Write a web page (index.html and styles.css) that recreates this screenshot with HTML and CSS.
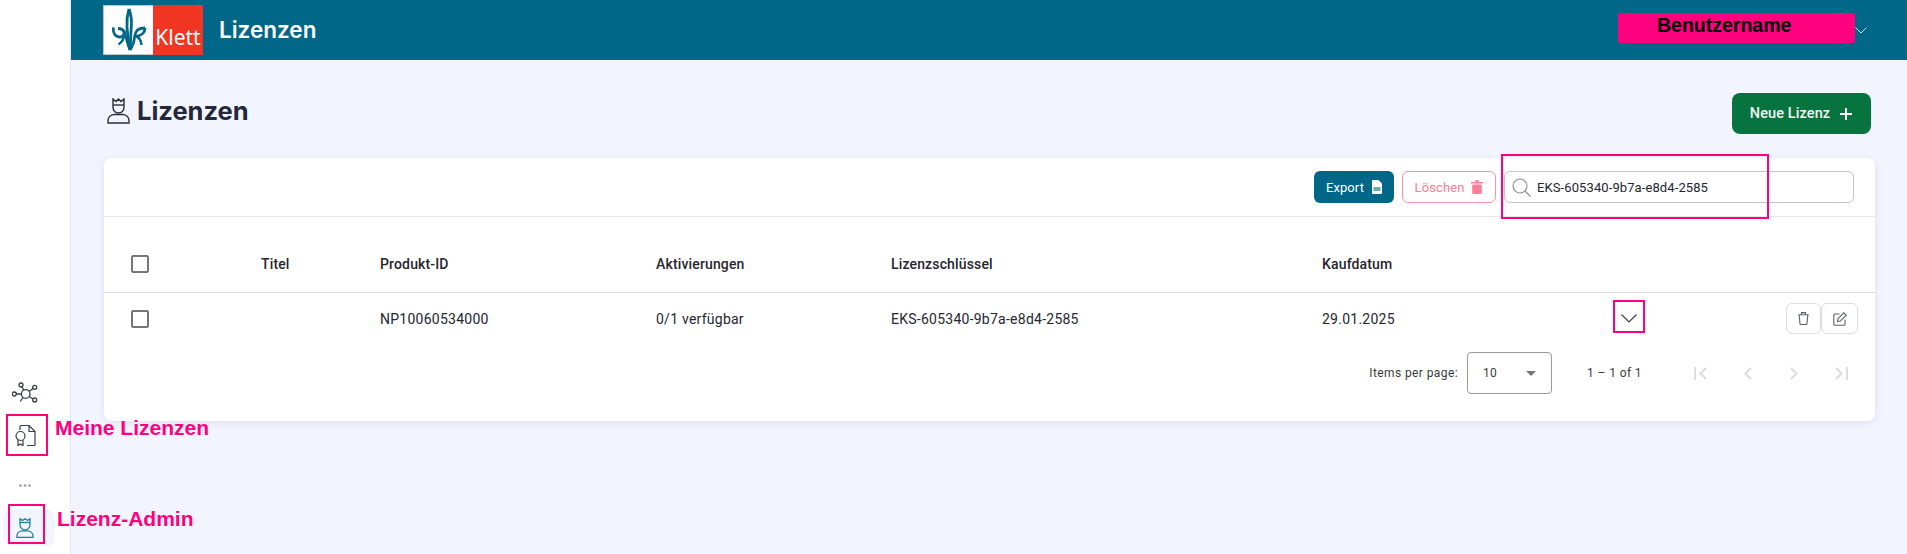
FILE: index.html
```html
<!DOCTYPE html>
<html lang="de">
<head>
    <meta charset="UTF-8">
    <title>Lizenzen</title>
    <link rel="stylesheet" href="styles.css">
</head>
<body>
    <aside class="sidebar">
        <div class="nav-item nav-network">
            <svg width="26" height="26" viewBox="0 0 26 26" fill="none" stroke="#3a3d4a" stroke-width="1.3">
                <circle cx="13.700" cy="14" r="4.300"/><circle cx="9" cy="5" r="2"/><circle cx="22.700" cy="7.300" r="2"/><circle cx="2.300" cy="14" r="2"/><circle cx="22.700" cy="20" r="2"/>
                <path d="M10 6.800l1.800 3.500M21 8.500l-4.200 3M4.300 14h5.100M21 19l-4-2.500M11 17.500l-2.800 4"/>
            </svg>
        </div>
        <div class="nav-item nav-license">
            <svg width="21" height="21" viewBox="0 0 21 21" fill="none" stroke="#3a3d4a" stroke-width="1.200">
                <path d="M5 5V2a1.500 1.500 0 0 1 1.500-1.500H14L20 6.500v13a1 1 0 0 1-1 1h-7"/>
                <path d="M14 .5v6h6"/>
                <circle cx="5.500" cy="11" r="4.500"/>
                <path d="M3 15v5.500l2.500-1.500L8 20.500V15"/>
            </svg>
        </div>
        <svg class="nav-dots" width="12" height="3" viewBox="0 0 12 3" fill="#9a9ca6"><circle cx="1.500" cy="1.500" r="1.300"/><circle cx="6" cy="1.500" r="1.300"/><circle cx="10.500" cy="1.500" r="1.300"/></svg>
        <div class="nav-item nav-admin">
            <svg width="18" height="20" viewBox="0 0 18 20" fill="none" stroke="#1f7f9c" stroke-width="1.300">
                <path d="M4 .8l2.500 1.700L9 .8l2.500 1.700L14 .8v6a5 5 0 0 1-10 0z"/>
                <path d="M4 4.500h10"/>
                <path d="M1 19.300v-1.500a5.500 5.500 0 0 1 5.500-5h5a5.500 5.500 0 0 1 5.500 5v1.500z"/>
            </svg>
        </div>
    </aside>

    <div class="main">
        <header class="topbar">
            <div class="logo">
                <div class="logo-left">
                    <svg width="49" height="48" viewBox="0 0 49 48" fill="none" stroke="#006788" stroke-width="2.800">
                        <path d="M25 3c-1.500 5-2.500 11-2 18 .4 8 1.500 16 3 23"/>
                        <path d="M25 3c1.800 5 3 11 2.300 18-.6 8-.8 16-1.300 23"/>
                        <path d="M9.500 21.500c-1 5 1.500 9 6 9.500 3 .3 5-2 4.500-4.500-.5-2.500-3-4-6-4"/>
                        <path d="M20 29c0 4-2 7-5.500 9.500" stroke-width="2.400"/>
                        <path d="M20 24c2 5 2.500 13 6 20" stroke-width="2.400"/>
                        <path d="M41 22c-3 0-6 .5-8 2.500-2 2.500-2.500 6-3 10-.4 3-2 6-4 9.500"/>
                        <path d="M41 22c0 4-3 8-10 8.500"/>
                        <path d="M30.500 30c4 .5 6.500 4 7 9" stroke-width="2.400"/>
                    </svg>
                </div>
                <div class="logo-right">Klett</div>
            </div>
            <div class="topbar-title">Lizenzen</div>
            <div class="user">
                <span class="user-name">Benutzername</span>
                <svg width="12" height="7" viewBox="0 0 12 7" fill="none" stroke="#cfe3ea" stroke-width="1"><path d="M.5.5l5.500 5.500L11.500.5"/></svg>
            </div>
        </header>

        <div class="content">
            <div class="title-row">
                <h1 class="page-title">
                    <svg width="23" height="26" viewBox="0 0 23 26" fill="none" stroke="#2a2d3e" stroke-width="1.400">
                        <path d="M6 1l3 2.500L11.500 1 14 3.500 17 1v8.500a5.500 5.500 0 0 1-11 0z"/>
                        <path d="M6 7h11"/>
                        <path d="M1 25v-3a6.500 6.500 0 0 1 6.500-5.500h8A6.500 6.500 0 0 1 22 22v3z"/>
                    </svg>
                    Lizenzen
                </h1>
                <button class="btn btn-new">Neue Lizenz
                    <svg width="14" height="14" viewBox="0 0 14 14" stroke="#fff" stroke-width="2"><path d="M7 1v12M1 7h12"/></svg>
                </button>
            </div>

            <div class="card">
                <div class="toolbar">
                    <button class="btn btn-export">Export
                        <svg width="10" height="14" viewBox="0 0 10 14"><path fill="#fff" d="M1 0h5.500L10 3.500V13a1 1 0 0 1-1 1H1a1 1 0 0 1-1-1V1a1 1 0 0 1 1-1z"/><rect x="1.500" y="7" width="7" height="4" fill="#6fa8bb"/></svg>
                    </button>
                    <button class="btn btn-delete">Löschen
                        <svg width="12" height="14" viewBox="0 0 12 14" fill="#ff7d96"><path d="M0 2h12v1.500H0zM4 .3h4v1.500H4zM1.200 4.500h9.600V13a1 1 0 0 1-1 1H2.200a1 1 0 0 1-1-1z"/></svg>
                    </button>
                    <div class="search">
                        <svg width="19" height="19" viewBox="0 0 19 19" fill="none" stroke="#8f8f9a" stroke-width="1.200"><circle cx="8" cy="8" r="7"/><path d="M13 13l5.500 5.500"/></svg>
                        <span>EKS-605340-9b7a-e8d4-2585</span>
                    </div>
                </div>

                <div class="table-row table-head">
                    <div><span class="checkbox"></span></div>
                    <div>Titel</div>
                    <div>Produkt-ID</div>
                    <div>Aktivierungen</div>
                    <div>Lizenzschlüssel</div>
                    <div>Kaufdatum</div>
                </div>
                <div class="table-row table-body">
                    <div><span class="checkbox"></span></div>
                    <div></div>
                    <div>NP10060534000</div>
                    <div>0/1 verfügbar</div>
                    <div>EKS-605340-9b7a-e8d4-2585</div>
                    <div>29.01.2025</div>
                    <div class="row-toggle">
                        <svg width="16" height="9" viewBox="0 0 16 9" fill="none" stroke="#3a3d4a" stroke-width="1.200"><path d="M.5.5L8 8 15.500.5"/></svg>
                    </div>
                    <div class="row-actions">
                        <span class="icon-btn">
                            <svg width="11" height="13" viewBox="0 0 11 13" fill="none" stroke="#5c5f6e" stroke-width="1.100"><path d="M1.200 3l.8 8.800a.8.800 0 0 0 .8.700h5.400a.8.800 0 0 0 .8-.7L9.800 3M.3 2.700h10.400M3.500 2.500V.6h4v1.900"/></svg>
                        </span>
                        <span class="icon-btn icon-btn-wide">
                            <svg width="14" height="14" viewBox="0 0 14 14" fill="none" stroke="#5c5f6e" stroke-width="1.100"><path d="M6.500 2H1.800a1 1 0 0 0-1 1v9.200a1 1 0 0 0 1 1H11a1 1 0 0 0 1-1V7.500"/><path d="M4.500 9.500l.5-2.800L10.800.8l2.400 2.400-5.900 5.900z"/></svg>
                        </span>
                    </div>
                </div>

                <div class="paginator">
                    <span class="items-label">Items per page:</span>
                    <div class="page-select"><span>10</span><i class="caret"></i></div>
                    <span class="range">1 – 1 of 1</span>
                    <span class="page-btn"><svg width="13" height="13" viewBox="0 0 13 13" fill="none" stroke="#dcdcdc" stroke-width="2"><path d="M1 0v13M12 1L6.500 6.500 12 12"/></svg></span>
                    <span class="page-btn"><svg width="9" height="13" viewBox="0 0 9 13" fill="none" stroke="#dcdcdc" stroke-width="2"><path d="M8 1L2.500 6.500 8 12"/></svg></span>
                    <span class="page-btn"><svg width="9" height="13" viewBox="0 0 9 13" fill="none" stroke="#dcdcdc" stroke-width="2"><path d="M1 1l5.500 5.500L1 12"/></svg></span>
                    <span class="page-btn"><svg width="13" height="13" viewBox="0 0 13 13" fill="none" stroke="#dcdcdc" stroke-width="2"><path d="M12 0v13M1 1l5.500 5.500L1 12"/></svg></span>
                </div>
            </div>
        </div>
    </div>

    <!-- annotations lying over the screenshot -->
    <div class="mark mark-search"></div>
    <div class="mark mark-toggle"></div>
    <div class="mark mark-license"></div>
    <div class="mark mark-admin"></div>
    <div class="note note-license">Meine Lizenzen</div>
    <div class="note note-admin">Lizenz-Admin</div>
</body>
</html>
```

FILE: styles.css
```css
* {
    box-sizing: border-box;
}

body {
    margin: 0;
    width: 1907px;
    height: 554px;
    overflow: hidden;
    display: flex;
    position: relative;
    font-family: Roboto, Arial, sans-serif;
    font-size: 14px;
    letter-spacing: 0.25px;
    color: #25262e;
    background-color: #f3f5fe;
}

/* sidebar */
.sidebar {
    width: 71px;
    flex: none;
    background-color: #fff;
    border-right: 1px solid #e6e9f4;
    display: flex;
    flex-direction: column;
    padding: 380px 0 8px 3px;
}

.nav-item {
    width: 52px;
    display: flex;
    align-items: center;
}

.nav-network {
    height: 26px;
    padding-left: 9px;
}

.nav-license {
    height: 21px;
    margin-top: 19px;
    padding-left: 12px;
}

.nav-dots {
    display: block;
    flex: none;
    margin: 38px 0 0 16px;
}

.nav-admin {
    height: 36px;
    flex: none;
    margin-top: 23px;
    padding-left: 13px;
    border-radius: 8px;
    background-color: #f3f5fe;
}

/* header */
.main {
    flex: 1;
    display: flex;
    flex-direction: column;
}

.topbar {
    height: 60px;
    flex: none;
    background-color: #006788;
    display: flex;
    align-items: center;
    padding: 0 40px 0 32px;
    color: #fff;
}

.logo {
    width: 100px;
    height: 50px;
    display: flex;
    flex: none;
}

.logo-left {
    width: 50px;
    background-color: #fff;
    border: 1px solid #c4c4c4;
    border-right: 0;
    display: flex;
    align-items: center;
    justify-content: center;
}

.logo-right {
    width: 50px;
    background-color: #f03522;
    color: #fff;
    font-family: "Noto Sans", sans-serif;
    font-size: 21px;
    line-height: 28px;
    letter-spacing: 0;
    padding-top: 18px;
    text-align: center;
}

.topbar-title {
    font-family: Inter, sans-serif;
    font-size: 22.500px;
    font-weight: 600;
    letter-spacing: 0;
    margin: -2px 0 0 16px;
}

.user {
    margin-left: auto;
    display: flex;
    align-items: center;
}

.user-name {
    width: 237px;
    height: 30px;
    margin-top: -4px;
    padding: 0 0 6px 39px;
    background-color: #ff007f;
    color: #000;
    font-family: "Liberation Sans", Arial, sans-serif;
    font-size: 19.500px;
    font-weight: 700;
    letter-spacing: 0;
    border-radius: 2px;
    display: flex;
    align-items: center;
}

/* page content */
.content {
    padding: 33px 32px 0 33px;
}

.title-row {
    height: 41px;
    display: flex;
    justify-content: space-between;
    align-items: center;
    padding-right: 4px;
}

.page-title {
    margin: -6px 0 0 3px;
    display: flex;
    align-items: center;
    gap: 7px;
    font-family: Inter, sans-serif;
    font-size: 25.500px;
    font-weight: 700;
    letter-spacing: 0;
    color: #25273a;
}

.btn {
    font-family: Roboto, Arial, sans-serif;
    font-size: 13px;
    letter-spacing: 0.1px;
    display: flex;
    align-items: center;
    justify-content: center;
    border-radius: 6px;
    border: 0;
}

.btn-new {
    width: 139px;
    height: 41px;
    gap: 9px;
    border-radius: 8px;
    font-size: 14.500px;
    font-weight: 500;
    background-color: #07733f;
    color: #f4f4f4;
}

.card {
    height: 263px;
    margin-top: 24px;
    background-color: #fff;
    border-radius: 8px;
    box-shadow: 0 2px 8px rgba(90, 100, 170, 0.14);
}

.toolbar {
    height: 59px;
    display: flex;
    justify-content: flex-end;
    align-items: center;
    gap: 8px;
    padding-right: 21px;
    border-bottom: 1px solid #e6e6ee;
}

.btn-export {
    width: 80px;
    height: 32px;
    gap: 8px;
    background-color: #006788;
    color: #fff;
}

.btn-delete {
    width: 94px;
    height: 32px;
    gap: 7px;
    background-color: #fff;
    border: 1px solid #ff8fa5;
    color: #ff7d96;
}

.search {
    width: 350px;
    height: 32px;
    display: flex;
    align-items: center;
    gap: 6px;
    padding-left: 7px;
    border: 1px solid #c2c2d0;
    border-radius: 6px;
    font-size: 13px;
    letter-spacing: 0.1px;
}

/* table */
.table-row {
    display: grid;
    grid-template-columns: 130px 119px 276px 235px 431px 291px 173px 1fr;
    align-items: center;
    padding-left: 27px;
}

.table-head {
    height: 57px;
    margin-top: 19px;
    font-weight: 500;
    letter-spacing: 0.15px;
    border-bottom: 1px solid #dedede;
}

.table-body {
    height: 51px;
}

.checkbox {
    display: block;
    width: 18px;
    height: 18px;
    border: 2px solid #757575;
    border-radius: 2px;
}

.row-toggle {
    display: flex;
    padding-left: 8px;
}

.row-actions {
    display: flex;
}

.icon-btn {
    width: 35px;
    height: 31px;
    display: flex;
    align-items: center;
    justify-content: center;
    border: 1px solid #dedede;
    border-radius: 6px;
}

.icon-btn-wide {
    width: 37px;
}

.paginator {
    height: 58px;
    display: flex;
    align-items: center;
    padding-right: 10px;
    justify-content: flex-end;
    font-size: 12px;
    color: #3a3a3a;
    letter-spacing: 0.4px;
}

.page-select {
    width: 85px;
    height: 42px;
    margin-left: 9px;
    display: flex;
    align-items: center;
    justify-content: space-between;
    padding: 0 15px;
    border: 1px solid #9a9a9a;
    border-radius: 4px;
}

.caret {
    width: 0;
    height: 0;
    border-left: 5px solid transparent;
    border-right: 5px solid transparent;
    border-top: 5px solid #757575;
}

.range {
    margin: 0 35px 0 35px;
}

.page-btn {
    width: 47px;
    display: flex;
    justify-content: center;
}

/* annotations */
.mark {
    position: absolute;
    border: 2px solid #ff007f;
}

.mark-search {
    left: 1501px;
    top: 154px;
    width: 268px;
    height: 65px;
}

.mark-toggle {
    left: 1613px;
    top: 300px;
    width: 32px;
    height: 33px;
}

.mark-license {
    left: 6px;
    top: 414px;
    width: 42px;
    height: 42px;
}

.mark-admin {
    left: 8px;
    top: 504px;
    width: 37px;
    height: 40px;
}

.note {
    position: absolute;
    color: #ff007f;
    font-family: "Liberation Sans", Arial, sans-serif;
    font-size: 21px;
    font-weight: 700;
    letter-spacing: 0;
    line-height: 24px;
}

.note-license {
    left: 55px;
    top: 416px;
}

.note-admin {
    left: 57px;
    top: 507px;
}
```
